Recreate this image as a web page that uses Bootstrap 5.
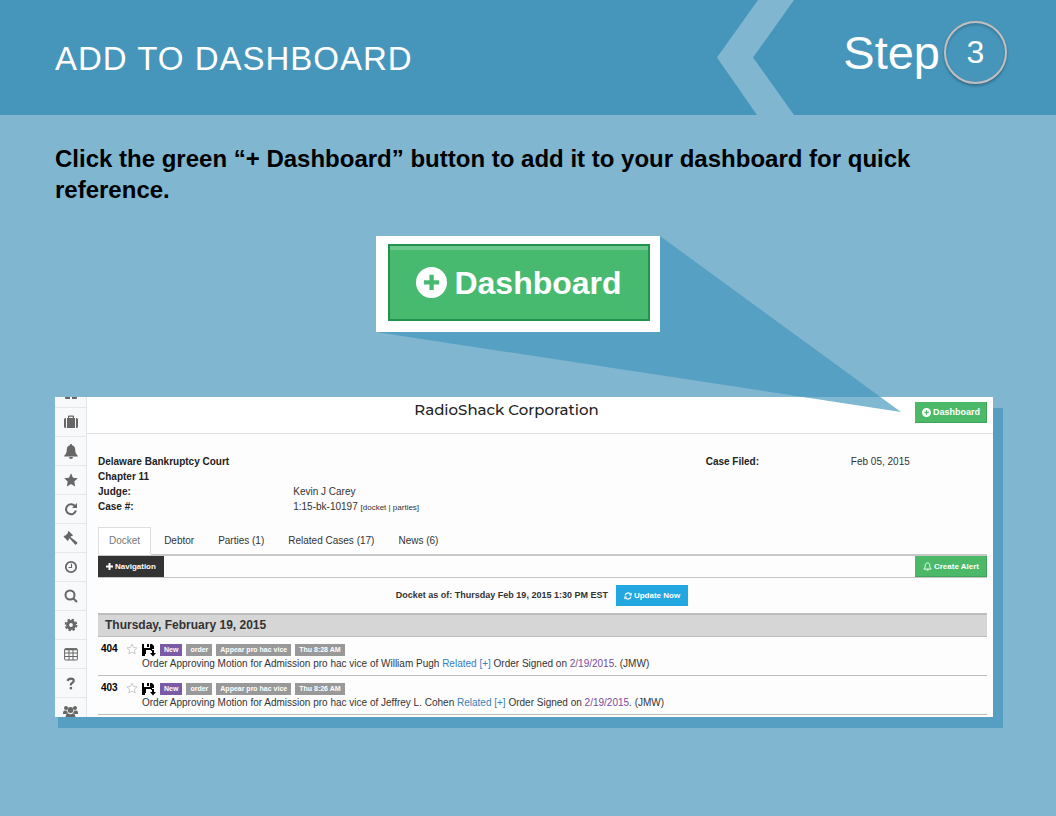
<!DOCTYPE html>
<html lang="en">
<head>
<meta charset="utf-8">
<meta name="viewport" content="width=device-width, initial-scale=1">
<title>Add to Dashboard</title>
<link href="https://cdn.jsdelivr.net/npm/bootstrap@5.3.0/dist/css/bootstrap.min.css" rel="stylesheet">
<style>
:root{--sky:#80b6d0;--deep:#4696bc;--shade:#579fc2}
body{background:var(--sky);font-family:"Liberation Sans",Arial,sans-serif;color:#000;min-height:100vh}
svg{display:block;flex:none}
.ico{fill:currentColor}
.slide-head{background:var(--deep);height:115px;padding:0 49px 0 55px;color:#fff}
.slide-title{font-size:33px;line-height:40px;letter-spacing:1px;padding-top:2px}
.chevron{width:77px;height:115px;fill:var(--sky)}
.step{padding:0 0 11px 49px;gap:4px;font-size:47px;line-height:1}
.step-no{width:63px;height:63px;border:2px solid #c4bdbd;font-size:32px;box-shadow:0 2px 3px rgba(0,0,0,.3),inset 0 2px 3px rgba(0,0,0,.2)}
.slide-body{padding:28px 63px 0 55px}
.lead-in{font-size:24px;line-height:31px;font-weight:700;margin:0 0 31px}
.stage-callout{padding-right:12px;margin-bottom:65px}
.frame-white{background:#fff;padding:8px 10px 11px 12px;z-index:1}
.btn-big{width:262px;height:77px;gap:7px;border:2px solid #22924f;border-radius:0;background:linear-gradient(#6cc88d 4px,#47ba70 4px);color:#fff;font-size:32px;font-weight:700;line-height:1}
.btn-big:hover{color:#fff;background:#47ba70}
.beam{position:absolute;z-index:2;top:0;left:calc(50% - 148px);width:calc(50% + 56px);height:176px;pointer-events:none;fill:rgba(66,149,188,.67)}
.shot-wrap{position:relative}
.shot-wrap::before{content:"";position:absolute;inset:11px -10px -11px 3px;background:var(--shade)}
.shot{position:relative;background:#fdfdfd;color:#333;overflow:hidden}
.rail{width:32px;contain:size;overflow:hidden;background:#f7f9fa;border-right:1px solid #e3e5e6;color:#666}
.rail a{height:29px;flex:none;color:inherit;border-bottom:1px solid #e6e8e9}
.rail a:first-child{height:11px;overflow:hidden;align-items:flex-end!important;padding-bottom:8px}
.shot-top{background:#fff;border-bottom:1px solid #e2e2e2;height:37px;padding:5px 6px 0 11px}
.case-name{font:500 15px/16px Montserrat,Inter,sans-serif;color:#222;margin:0}
.pill-btn{border:0;border-radius:0;color:#fff;font-size:8px;line-height:11px;font-weight:700;height:21px;padding:0 8px;gap:2px;white-space:nowrap}
.shot-top .pill-btn{font-size:9px;padding:0 7px}
.pill-btn:hover{color:#fff}
.g-btn,.g-btn:hover{background:#4bb967;box-shadow:inset -1px -1px #3da65a}
.d-btn,.d-btn:hover{background:#333}
.b-btn,.b-btn:hover{background:#22a7e0}
.shot-main{padding:20px 6px 2px 11px}
.meta{display:grid;grid-template-columns:195fr 412fr 145fr 136fr;font-size:10px;line-height:15px;margin:0 0 12px}
.meta dt,.meta dd{margin:0}
.meta dt{font-weight:700;color:#222}
.meta small{font-size:8px}
.meta a{color:inherit;text-decoration:none}
.tabs{border-bottom:2px solid #c8c8c8}
.tabs .nav-link{border:1px solid transparent;border-radius:0;margin:0 2px -1px 0;padding:0 10px;font-size:10px;line-height:26px;color:#333}
.tabs .nav-link.active{background:#fff;border-color:#ddd #ddd #fff;color:#777}
.tools{border-bottom:1px solid #c4c4c4}
.status{height:35px;gap:8px;font-size:9px;font-weight:700;padding-right:1px}
.day{background:#d6d6d6;border:1px solid #bdbdbd;border-width:2px 0 1px;font-size:12px;line-height:21px;font-weight:700;padding-left:7px;margin:0}
.entry{border-bottom:1px solid #bdbdbd;height:39px;padding:6px 0 0 3px;font-size:10px;line-height:13px}
.entry .no{width:25px;line-height:12px;font-weight:700;color:#000}
.entry .act{width:16px}
.tag{background:#999;color:#fff;font-size:7px;line-height:12px;font-weight:700;padding:0 4px;white-space:nowrap}
.tag-new{background:#7b5aa6}
.entry a{color:#3581bd;text-decoration:none}
.entry .seen{color:#7a4a9c}
</style>
</head>
<body>
<svg width="0" height="0" class="position-absolute" aria-hidden="true">
  <symbol id="plus-circle" viewBox="0 0 30 30"><path fill-rule="evenodd" d="M15 0a15 15 0 1 0 0 30 15 15 0 0 0 0-30zm-2 7.500h4.200v5.300h5.300v4.200h-5.300v5.300H13V17H7.700v-4.200H13z"/></symbol>
  <symbol id="save" viewBox="0 0 14 14"><path fill-rule="evenodd" d="M0 1h2v4h6V1h2l2 2v3h-2v2H9V7H4v4H3v2H0zM5 1h2v3H5zM10 7h2v3h2l-3 3.500-3-3.500h2z"/></symbol>
  <symbol id="star-o" viewBox="0 0 16 16"><path fill="none" stroke="#c4c4c4" stroke-width="1.200" d="M8 1.500l2 4.400 4.700.6-3.500 3.200 1 4.800L8 12.100l-4.200 2.400 1-4.800L1.300 6.500 6 5.900z"/></symbol>
</svg>

<header class="slide-head d-flex align-items-center">
  <h1 class="slide-title m-0 me-auto fw-normal">ADD TO DASHBOARD</h1>
  <svg class="chevron" viewBox="0 0 77 115" preserveAspectRatio="none" aria-hidden="true"><path d="M41 0h36L36 57.500 77 115H40L0 57.500z"/></svg>
  <div class="step d-flex align-items-center"><span>Step</span><span class="step-no rounded-circle d-flex align-items-center justify-content-center">3</span></div>
</header>

<main class="slide-body">
  <p class="lead-in">Click the green “+ Dashboard” button to add it to your dashboard for quick reference.</p>
  <div class="position-relative">
    <div class="stage-callout d-flex justify-content-center">
      <div class="frame-white position-relative">
        <button type="button" class="btn btn-big p-0 d-flex align-items-center justify-content-center"><svg class="ico" width="31" height="31"><use href="#plus-circle"/></svg>Dashboard</button>
      </div>
    </div>
    <svg class="beam" viewBox="0 0 525 176" preserveAspectRatio="none" aria-hidden="true"><path d="M284 0L525 176 0 96H284z"/></svg>

    <div class="shot-wrap">
    <div class="shot d-flex">
      <nav class="rail d-flex flex-column flex-shrink-0" aria-label="Sections">
        <a href="#" class="d-flex justify-content-center" aria-label="Home"><svg class="ico" width="14" height="10" viewBox="0 0 14 10"><path d="M1 0h12v9a1 1 0 0 1-1 1H8V8H6v2H2a1 1 0 0 1-1-1z"/></svg></a>
        <a href="#" class="d-flex align-items-center justify-content-center" aria-label="Cases"><svg class="ico" width="14" height="14" viewBox="0 0 14 14"><path d="M0 4.500A1.500 1.500 0 0 1 1.500 3H2v10h-.5A1.500 1.500 0 0 1 0 11.500zM12 3h.5A1.500 1.500 0 0 1 14 4.500v7a1.500 1.500 0 0 1-1.500 1.500H12zM3 3h1V1.500Q4 .5 5 .5h4q1 0 1 1V3h1v10H3zm2.200 0h3.600V1.700H5.200z" fill-rule="evenodd"/></svg></a>
        <a href="#" class="d-flex align-items-center justify-content-center" aria-label="Alerts"><svg class="ico" width="14" height="15" viewBox="0 0 14 15"><path d="M7 0a1 1 0 0 1 1 1.200c2 .5 3.200 2 3.200 4.300 0 3 .8 4.700 2.600 6.200V12.500H.2v-.8C2 10.200 2.800 8.500 2.800 5.500 2.800 3.200 4 1.700 6 1.200A1 1 0 0 1 7 0zM5 13h4a2 2 0 0 1-4 0z"/></svg></a>
        <a href="#" class="d-flex align-items-center justify-content-center" aria-label="Favorites"><svg class="ico" width="14" height="14" viewBox="0 0 14 14"><path d="M7 .3l2 4.400 4.800.6-3.500 3.300.9 4.800L7 11.100l-4.200 2.300.9-4.800L.2 5.300 5 4.700z"/></svg></a>
        <a href="#" class="d-flex align-items-center justify-content-center" aria-label="Refresh"><svg width="14" height="14" viewBox="0 0 14 14"><path fill="none" stroke="currentColor" stroke-width="2" d="M11 4.200A5 5 0 1 0 11.900 8.500"/><path fill="currentColor" d="M13 1v5H8z"/></svg></a>
        <a href="#" class="d-flex align-items-center justify-content-center" aria-label="Judgments"><svg class="ico" width="15" height="14" viewBox="0 0 15 14"><path d="M5.700 0l4.300 4.200-1 1-.7-.2-.9.900 6.700 5.300q.5.500 0 1.200l-.9 1q-.6.500-1.200 0L6.500 7.300l-.9.900.2.700-1 1L.5 5.600l1-1 .7.200L5 2.100l-.3-.9z"/></svg></a>
        <a href="#" class="d-flex align-items-center justify-content-center" aria-label="History"><svg width="14" height="14" viewBox="0 0 14 14" fill="none" stroke="currentColor"><circle cx="7" cy="7" r="5.200" stroke-width="1.800"/><path d="M7.500 3.800V7.500H4.500" stroke-width="1.200"/></svg></a>
        <a href="#" class="d-flex align-items-center justify-content-center" aria-label="Search"><svg width="14" height="14" viewBox="0 0 14 14" fill="none" stroke="currentColor" stroke-width="2"><circle cx="6" cy="6" r="4.500"/><path d="M9.200 9.200L13 13"/></svg></a>
        <a href="#" class="d-flex align-items-center justify-content-center" aria-label="Settings"><svg width="14" height="14" viewBox="0 0 14 14" fill="none" stroke="currentColor"><circle cx="7" cy="7" r="3.400" stroke-width="3"/><circle cx="7" cy="7" r="5.400" stroke-width="1.800" stroke-dasharray="2.400 1.840"/></svg></a>
        <a href="#" class="d-flex align-items-center justify-content-center" aria-label="Tables"><svg width="14" height="13" viewBox="0 0 14 13" fill="none" stroke="currentColor"><rect x=".6" y=".6" width="12.800" height="11.400" rx="1"/><path d="M1 1.500h12" stroke-width="1.500"/><path d="M1 5h12M1 8.500h12M5 2v10M9 2v10"/></svg></a>
        <a href="#" class="d-flex align-items-center justify-content-center" aria-label="Help"><svg width="10" height="13" viewBox="0 0 10 13"><path fill="none" stroke="currentColor" stroke-width="2.200" d="M1.600 3.900Q2.300 1.600 4.800 1.600q2.900 0 2.900 2.200 0 1.300-1.600 2.200T4.900 8.600"/><path fill="currentColor" d="M3.700 10h2.400v2.300H3.700z"/></svg></a>
        <a href="#" class="d-flex align-items-center justify-content-center" aria-label="People"><svg class="ico" width="15" height="15" viewBox="0 0 15 15"><circle cx="3" cy="3" r="2"/><circle cx="12" cy="3" r="2"/><circle cx="7.500" cy="5" r="2.900"/><path d="M0 8.500Q0 5.200 2 5.400l2 .3q0 1.500 1 2.300-1 .2-1.800 1H0zM15 8.500q0-3.300-2-3.100l-2 .3q0 1.500-1 2.300 1 .2 1.800 1H15zM2.500 13.500Q2.500 8.500 5 8.300q2.500 1.700 5 0 2.500.2 2.500 5.200 0 1.500-1.500 1.500H4q-1.500 0-1.500-1.500z"/></svg></a>
      </nav>

      <div class="flex-grow-1">
        <div class="shot-top d-flex align-items-start">
          <div class="flex-grow-1 text-center"><h2 class="case-name">RadioShack Corporation</h2></div>
          <button type="button" class="btn pill-btn g-btn d-flex align-items-center"><svg class="ico" width="9" height="9"><use href="#plus-circle"/></svg>Dashboard</button>
        </div>
        <div class="shot-main">
          <dl class="meta">
            <dt>Delaware Bankruptcy Court</dt><dd></dd><dt>Case Filed:</dt><dd>Feb 05, 2015</dd>
            <dt>Chapter 11</dt><dd></dd><dt></dt><dd></dd>
            <dt>Judge:</dt><dd>Kevin J Carey</dd><dt></dt><dd></dd>
            <dt>Case #:</dt><dd>1:15-bk-10197 <small>[<a href="#">docket</a> | <a href="#">parties</a>]</small></dd>
          </dl>
          <ul class="nav tabs">
            <li class="nav-item"><a class="nav-link active" href="#">Docket</a></li>
            <li class="nav-item"><a class="nav-link" href="#">Debtor</a></li>
            <li class="nav-item"><a class="nav-link" href="#">Parties (1)</a></li>
            <li class="nav-item"><a class="nav-link" href="#">Related Cases (17)</a></li>
            <li class="nav-item"><a class="nav-link" href="#">News (6)</a></li>
          </ul>
          <div class="tools d-flex justify-content-between">
            <button type="button" class="btn pill-btn d-btn d-flex align-items-center"><svg class="ico" width="7" height="7" viewBox="0 0 7 7"><path d="M2.500 0h2v2.500H7v2H4.500V7h-2V4.500H0v-2h2.500z"/></svg>Navigation</button>
            <button type="button" class="btn pill-btn g-btn d-flex align-items-center"><svg width="9" height="9" viewBox="0 0 14 14" fill="none" stroke="currentColor" stroke-width="1.500"><path d="M7 1.500c2.500 0 3.500 1.800 3.500 4 0 2.800.8 4 2.300 5.500H1.200C2.700 9.500 3.500 8.300 3.500 5.500c0-2.200 1-4 3.500-4zM5.500 12.500h3"/></svg>Create Alert</button>
          </div>
          <div class="status d-flex align-items-center justify-content-center">
            <span>Docket as of: Thursday Feb 19, 2015 1:30 PM EST</span>
            <button type="button" class="btn pill-btn b-btn d-flex align-items-center"><svg width="8" height="8" viewBox="0 0 14 14"><path fill="none" stroke="currentColor" stroke-width="2.200" d="M2 6a5 5 0 0 1 9-2.200M12 8a5 5 0 0 1-9 2.200"/><path fill="currentColor" d="M13.500 1v5h-5zM.5 13V8h5z"/></svg>Update Now</button>
          </div>
          <h3 class="day">Thursday, February 19, 2015</h3>
          <div class="entry d-flex">
            <div class="no">404</div>
            <div class="act"><svg width="12" height="12"><use href="#star-o"/></svg></div>
            <div>
              <div class="d-flex align-items-center gap-1"><svg width="14" height="14" class="text-black ico"><use href="#save"/></svg><span class="tag tag-new">New</span><span class="tag">order</span><span class="tag">Appear pro hac vice</span><span class="tag">Thu 8:28 AM</span></div>
              <div>Order Approving Motion for Admission pro hac vice of William Pugh <a href="#">Related [+]</a> Order Signed on <a href="#" class="seen">2/19/2015</a>. (JMW)</div>
            </div>
          </div>
          <div class="entry d-flex">
            <div class="no">403</div>
            <div class="act"><svg width="12" height="12"><use href="#star-o"/></svg></div>
            <div>
              <div class="d-flex align-items-center gap-1"><svg width="14" height="14" class="text-black ico"><use href="#save"/></svg><span class="tag tag-new">New</span><span class="tag">order</span><span class="tag">Appear pro hac vice</span><span class="tag">Thu 8:26 AM</span></div>
              <div>Order Approving Motion for Admission pro hac vice of Jeffrey L. Cohen <a href="#">Related [+]</a> Order Signed on <a href="#" class="seen">2/19/2015</a>. (JMW)</div>
            </div>
          </div>
        </div>
      </div>
    </div>
    </div>
  </div>
</main>
<script src="https://cdn.jsdelivr.net/npm/bootstrap@5.3.0/dist/js/bootstrap.bundle.min.js"></script>
</body>
</html>
